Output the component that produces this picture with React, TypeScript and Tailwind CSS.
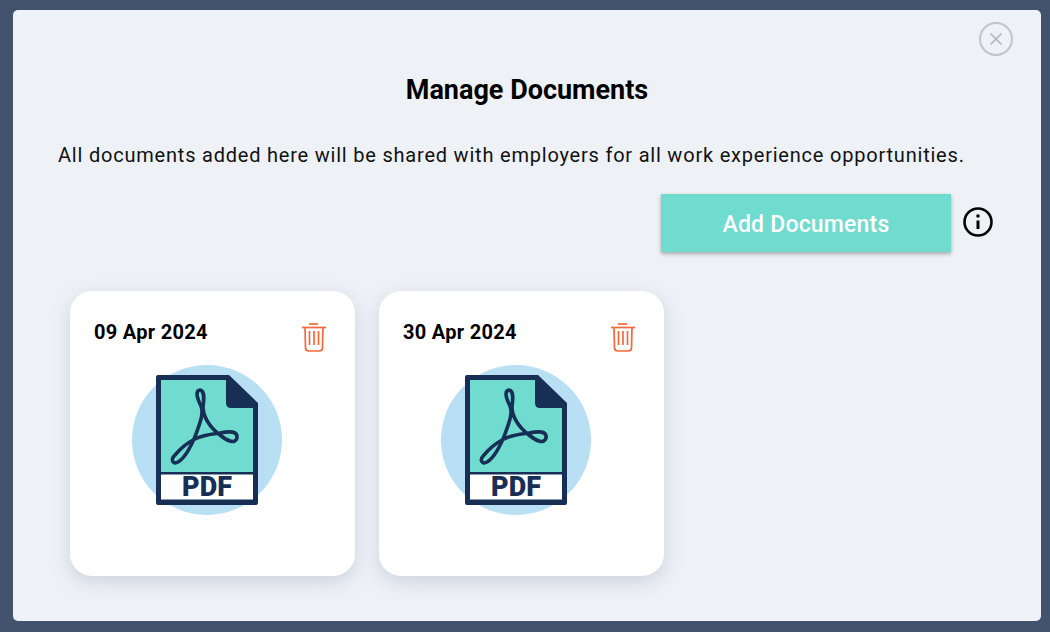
const font = { fontFamily: '"Roboto", "Liberation Sans", sans-serif' };

function PdfIcon() {
  return (
    <svg width="150" height="150" viewBox="0 0 150 150" className="block">
      <circle cx="75" cy="75" r="75" fill="#b9dff4" />
      <path d="M26 10 H97 L126 38 V138 Q126 140 124 140 H26 Q24 140 24 138 V12 Q24 10 26 10 Z" fill="#172f55" />
      <path d="M29 15 H94 V38 Q94 43 99 43 H121 V107 H29 Z" fill="#70dccf" />
      <rect x="29" y="109.500" width="92" height="25" fill="#ffffff" />
      <path
        d="M43 90 C38 95 41 100 46 97 C53 93 60 80 64 69 C68 58 72 48 69 41 C65 33 63 26 68 25 C73 26 72 34 71 42 C71 50 76 61 88 70 C94 75 103 80 105 73 C106 66 98 66 88 68 C80 69 70 70 63 74 C55 78 48 84 43 90 Z"
        fill="none"
        stroke="#172f55"
        strokeWidth="3.600"
        strokeLinejoin="round"
      />
      <text
        x="75"
        y="131"
        textAnchor="middle"
        fill="#172f55"
        fontSize="27"
        fontWeight="900"
        fontFamily="Roboto, sans-serif"
        textLength="50"
        lengthAdjust="spacing"
      >
        PDF
      </text>
    </svg>
  );
}

function TrashIcon() {
  return (
    <svg width="26" height="29" viewBox="0 0 26 29" fill="none" stroke="#f4683c" strokeWidth="1.700" className="block">
      <path d="M8 1 H17" />
      <path d="M1 4.500 H25" />
      <path d="M4 4.500 L4.500 25 Q4.500 28 8 28 H18 Q21.500 28 21.500 25 L22 4.500" />
      <path d="M8.500 8 V22 M13 8 V22 M17.500 8 V22" />
    </svg>
  );
}

function DocCard({ date }: { date: string }) {
  return (
    <div className="w-[285px] h-[285px] bg-white rounded-[22px] shadow-[0_6px_18px_rgba(120,135,170,0.28)] pt-[28px] px-[24px]">
      <div className="flex items-start justify-between">
        <span className="text-[20px] leading-[26px] font-bold text-black tracking-[0.3px]">{date}</span>
        <button className="mt-[4px] mr-[4px]">
          <TrashIcon />
        </button>
      </div>
      <div className="mt-[13px] -ml-[24px] pl-[62px]">
        <PdfIcon />
      </div>
    </div>
  );
}

export default function App() {
  return (
    <div className="w-[1050px] h-[632px] bg-[#43536e] pt-[10px] pl-[13px] pr-[9px] pb-[11px] overflow-hidden" style={font}>
      <div className="relative h-full bg-[#eef1f6] rounded-[5px]">
        <button className="absolute top-[12px] right-[28px] w-[34px] h-[34px] rounded-full border-2 border-[#c2c5c8] flex items-center justify-center">
          <svg width="14" height="14" viewBox="0 0 14 14" stroke="#b0b3b6" strokeWidth="1.500">
            <path d="M1.500 1.500 L12.500 12.500 M12.500 1.500 L1.500 12.500" />
          </svg>
        </button>
        <h1 className="pt-[62px] text-center text-[27px] leading-[36px] font-bold text-black">Manage Documents</h1>
        <p className="mt-[33px] ml-[45px] text-[20px] leading-[28px] text-[#111] whitespace-nowrap tracking-[0.79px]">
          All documents added here will be shared with employers for all work experience opportunities.
        </p>
        <div className="mt-[25px] flex items-center justify-end pr-[47px]">
          <button className="w-[290px] h-[58px] pt-[4px] bg-[#70dccf] text-white text-[23px] font-medium shadow-[0_2px_4px_rgba(0,0,0,0.3)] tracking-[0.2px]">
            Add Documents
          </button>
          <svg width="32" height="32" viewBox="0 0 32 32" fill="none" className="ml-[11px] mb-[2px] block">
            <circle cx="16" cy="16" r="13.500" stroke="#000" strokeWidth="2.600" />
            <circle cx="16" cy="10" r="1.800" fill="#000" />
            <path d="M16 14.500 V23" stroke="#000" strokeWidth="3" />
          </svg>
        </div>
        <div className="mt-[39px] ml-[57px] flex gap-[24px]">
          <DocCard date="09 Apr 2024" />
          <DocCard date="30 Apr 2024" />
        </div>
      </div>
    </div>
  );
}
